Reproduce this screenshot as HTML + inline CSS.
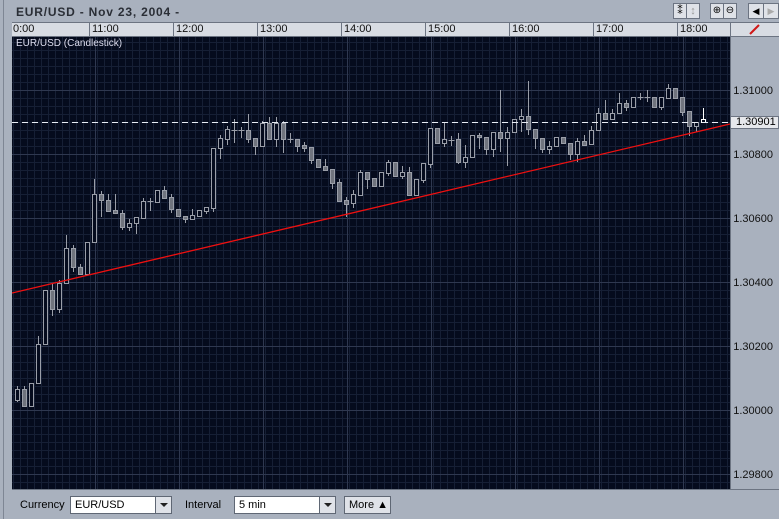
<!DOCTYPE html>
<html><head><meta charset="utf-8"><style>
*{margin:0;padding:0;box-sizing:border-box}
body{width:779px;height:519px;background:#a9b1be;font-family:"Liberation Sans",sans-serif;position:relative;overflow:hidden}
.abs{position:absolute}
.title{left:16px;top:5px;font-size:12px;font-weight:bold;color:#2a2e36;letter-spacing:0.8px}
.hdr{left:12px;top:22px;width:718px;height:15px;background:#d8dce3;border-top:1px solid #6c7482;border-bottom:1px solid #6c7482}
.hdr span{position:absolute;top:0;font-size:11px;color:#111;padding-left:2px;border-left:1px solid #6c7482;height:13px;line-height:13px}
.rax{left:730px;top:22px;width:49px;height:467px;background:#a9b1be;border-left:1px solid #6c7482}
.lab{position:absolute;right:6px;font-size:11px;color:#111}
.btn{position:absolute;top:3px;height:16px;background:#dfe2e8;border:1px solid #6c7482;font-size:11px;text-align:center;line-height:14px}
.bot{left:12px;top:489px;width:767px;height:30px;background:#a9b1be;border-top:1px solid #6c7482}
.combo{position:absolute;top:6px;height:18px;background:#fff;border:1px solid #5f6774;font-size:11px;line-height:16px;padding-left:4px}
.arr{position:absolute;right:0;top:0;width:16px;height:16px;background:#dfe2e8;border-left:1px solid #5f6774}
.arr:after{content:"";position:absolute;left:4px;top:6px;border-left:4px solid transparent;border-right:4px solid transparent;border-top:4px solid #222}
</style></head><body>
<div class="abs" style="left:3px;top:0;width:1px;height:519px;background:#7e8694"></div>
<div class="abs title">EUR/USD - Nov 23, 2004 -</div>
<div class="btn" style="left:673px;width:14px">⁑</div>
<div class="btn" style="left:686px;width:14px;color:#999">↕</div>
<div class="btn" style="left:710px;width:14px;font-size:10px">⊕</div>
<div class="btn" style="left:723px;width:14px;font-size:10px">⊖</div>
<div class="btn" style="left:748px;width:16px;font-size:9px">◀</div>
<div class="btn" style="left:763px;width:16px;font-size:9px;color:#aaa">▶</div>
<div class="abs hdr">
<span style="left:-1px;border:none">0:00</span><span style="left:77px">11:00</span><span style="left:161px">12:00</span><span style="left:245px">13:00</span><span style="left:329px">14:00</span><span style="left:413px">15:00</span><span style="left:497px">16:00</span><span style="left:581px">17:00</span><span style="left:665px">18:00</span>
</div>
<div class="abs" style="left:730px;top:22px;width:49px;height:15px;background:#d8dce3;border:1px solid #6c7482;border-right:none"><svg width="49" height="13"><line x1="19" y1="11" x2="28" y2="2" stroke="#d01818" stroke-width="2"/></svg></div>
<div class="abs rax" style="top:37px;height:452px">
<div class="lab" style="top:48px">1.31000</div>
<div class="lab" style="top:112px">1.30800</div>
<div class="lab" style="top:176px">1.30600</div>
<div class="lab" style="top:240px">1.30400</div>
<div class="lab" style="top:304px">1.30200</div>
<div class="lab" style="top:368px">1.30000</div>
<div class="lab" style="top:432px">1.29800</div>
<div style="position:absolute;left:0;top:79px;width:48px;height:13px;background:#e6e8ec;border:1px solid #6c7482;border-left:none;font-size:11px;line-height:11px;padding-left:5px">1.30901</div>
</div>
<svg class="abs" style="left:12px;top:37px" width="718" height="452" id="ch"></svg>
<div class="abs" style="left:16px;top:38px;font-size:10px;color:#dde">EUR/USD (Candlestick)</div>
<div class="abs bot">
<div class="abs" style="left:8px;top:9px;font-size:11px">Currency</div>
<div class="combo" style="left:58px;width:102px">EUR/USD<div class="arr"></div></div>
<div class="abs" style="left:173px;top:9px;font-size:11px">Interval</div>
<div class="combo" style="left:222px;width:102px">5 min<div class="arr"></div></div>
<div class="combo" style="left:332px;width:47px;background:#dfe2e8;padding-left:4px">More ▲</div>
</div>
<script>
var s='<rect width="718" height="452" fill="#050b1d"/>';
for(var x=1;x<718;x+=7)s+='<line x1="'+(x+.5)+'" y1="0" x2="'+(x+.5)+'" y2="452" stroke="#161f35"/>';
for(var y=5;y<452;y+=8)s+='<line x1="0" y1="'+(y+.5)+'" x2="718" y2="'+(y+.5)+'" stroke="#161f35"/>';
for(var h=0;h<9;h++){var X=h*84-1;if(X>0)s+='<line x1="'+(X+.5)+'" y1="0" x2="'+(X+.5)+'" y2="452" stroke="#2f3850"/>';}
[90,154,218,282,346,410,474].forEach(function(Y){Y-=37;s+='<line x1="0" y1="'+(Y+.5)+'" x2="718" y2="'+(Y+.5)+'" stroke="#2f3850"/>';});
var d=[[17,389,400,386,402,0],[24,389,406,386,406,1],[31,383,406,383,406,0],[38,344,383,336,383,0],[45,290,344,290,344,0],[52,290,309,283,316,1],[59,283,309,280,313,0],[66,248,283,235,283,0],[73,248,267,245,272,1],[80,267,274,264,274,1],[87,242,274,242,274,0],[94,194,242,179,242,0],[101,194,200,191,217,1],[108,200,211,194,211,1],[115,210,213,194,213,1],[122,213,227,210,230,1],[129,223,227,219,231,0],[136,217,223,217,234,0],[143,201,218,198,218,0],[150,201,201,198,211,2],[157,190,202,190,202,0],[164,190,198,186,198,1],[171,197,209,194,213,1],[178,209,216,209,216,1],[185,216,219,216,223,1],[192,215,219,209,219,0],[199,210,216,210,216,0],[206,207,211,207,214,0],[213,148,208,148,212,0],[220,138,148,135,159,0],[227,129,139,126,145,0],[234,130,130,119,143,2],[241,130,130,127,138,2],[248,130,139,114,143,1],[255,138,146,138,155,1],[262,123,146,121,146,0],[269,123,139,117,139,1],[276,123,139,117,147,0],[283,123,139,121,153,1],[290,139,139,133,143,2],[297,139,146,139,152,1],[304,145,148,142,152,1],[311,147,160,147,164,1],[318,159,167,159,167,1],[325,166,170,159,170,1],[332,169,183,169,189,1],[339,182,201,179,202,1],[346,200,204,197,217,1],[353,194,203,190,208,0],[360,172,195,170,195,0],[367,172,179,172,189,1],[374,178,186,178,186,1],[381,172,186,172,186,0],[388,162,173,160,176,0],[395,162,176,162,176,1],[402,172,176,166,179,0],[409,172,195,167,195,1],[416,179,195,179,195,0],[423,163,180,163,183,0],[430,128,164,128,168,0],[437,128,143,128,143,1],[444,139,143,122,147,0],[451,140,140,136,146,2],[458,139,162,133,164,1],[465,157,162,145,168,0],[472,135,157,135,157,0],[479,135,137,133,149,1],[486,137,149,137,155,1],[493,132,149,132,157,0],[500,132,138,90,152,1],[507,132,138,127,166,0],[514,119,132,119,132,0],[521,116,119,109,132,0],[528,116,129,81,135,1],[535,129,138,129,149,1],[542,138,149,138,153,1],[549,146,149,141,154,0],[556,137,146,137,146,0],[563,137,143,137,143,1],[570,143,154,143,160,1],[577,141,154,138,162,0],[584,141,145,135,145,1],[591,130,144,126,144,0],[598,113,130,108,130,0],[605,113,119,100,119,1],[612,113,119,109,119,0],[619,103,113,93,113,0],[626,103,107,100,111,1],[633,97,107,97,107,0],[640,97,97,93,100,2],[647,97,97,90,102,2],[654,97,107,97,107,1],[661,97,107,97,110,0],[668,88,98,84,98,0],[675,88,98,88,98,1],[682,97,112,97,116,1],[689,111,126,111,136,1],[696,122,126,122,132,0],[703,119,122,108,122,3]];
d.forEach(function(c){var x=c[0]-12+.5,t=c[1]-37,b=c[2]-37,hi=c[3]-37,lo=c[4]-37,col=c[5]==3?'#fff':'#9a9ea8';
s+='<line x1="'+x+'" y1="'+hi+'" x2="'+x+'" y2="'+lo+'" stroke="'+col+'"/>';
if(c[5]==2)s+='<line x1="'+(x-3)+'" y1="'+(t+.5)+'" x2="'+(x+3)+'" y2="'+(t+.5)+'" stroke="'+col+'"/>';
else s+='<rect x="'+(x-2)+'" y="'+(t+.5)+'" width="4" height="'+Math.max(b-t,2)+'" fill="'+(c[5]==1?'#70747e':'#050b1d')+'" stroke="'+col+'"/>';});
s+='<line x1="0" y1="85.5" x2="718" y2="85.5" stroke="#e8ecf4" stroke-dasharray="6,4"/>';
s+='<line x1="0" y1="256" x2="718" y2="87" stroke="#ee1010" stroke-width="1.3"/>';
document.getElementById('ch').innerHTML=s;
</script>
</body></html>
